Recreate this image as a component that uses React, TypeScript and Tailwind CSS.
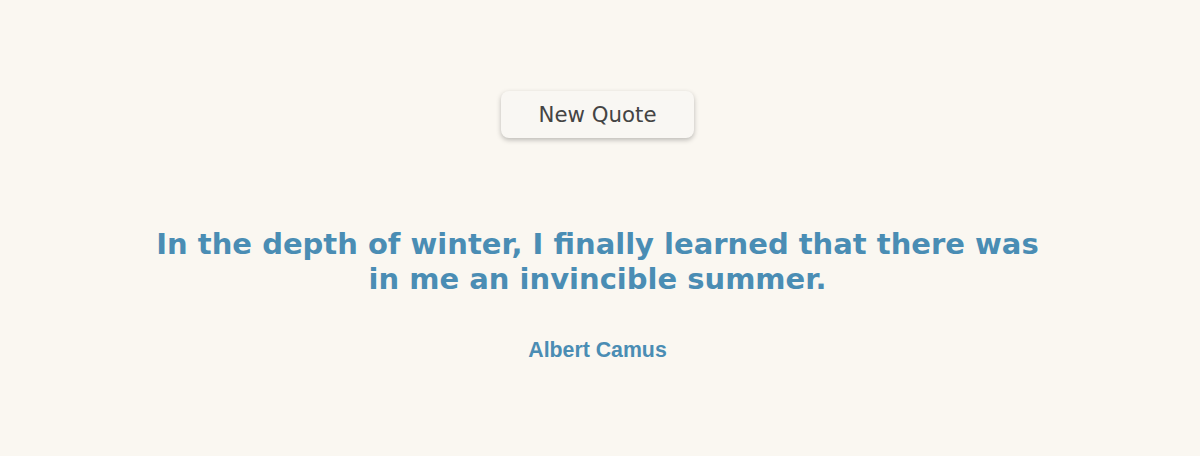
export default function App() {
  return (
    <div className="flex min-h-[456px] flex-col items-center bg-[#faf7f1] pr-[5px] pt-[91px]">
      <button className="h-[47px] w-[193px] rounded-lg bg-[#f9f7f3] font-['DejaVu_Sans',sans-serif] text-[21.3px] text-[#444] shadow-[0_2px_5px_rgba(0,0,0,0.25)]">
        New Quote
      </button>
      <blockquote className="mt-[89px] w-[900px] text-center font-['DejaVu_Sans',sans-serif] text-[29px] font-bold leading-[35px] text-[#4a8db4]">
        In the depth of winter, I finally learned that there was in me an invincible summer.
      </blockquote>
      <p className="mt-[38px] font-['Liberation_Sans',Arial,sans-serif] text-[21.3px] font-bold text-[#4a8db4]">
        Albert Camus
      </p>
    </div>
  );
}
